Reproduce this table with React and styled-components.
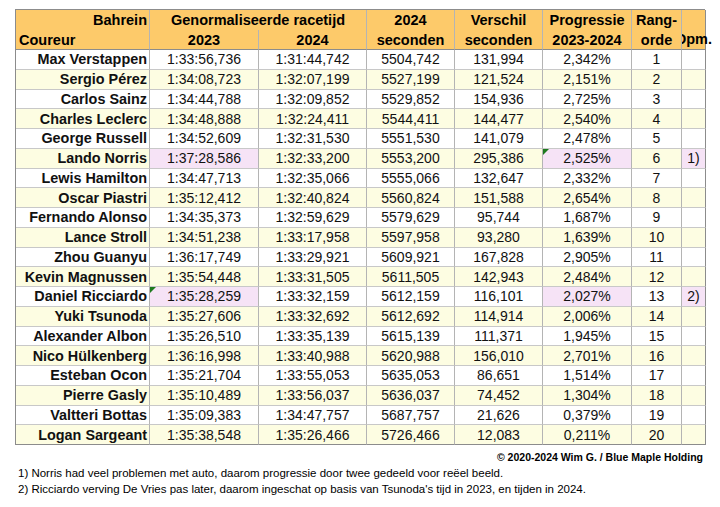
import React from 'react';
import styled, { createGlobalStyle } from 'styled-components';

const GlobalStyle = createGlobalStyle`
  body {
    margin: 0;
    background: #ffffff;
    font-family: "Liberation Sans", Arial, sans-serif;
    color: #000;
  }
`;

const ORANGE = '#fdca6a';
const CREAM = '#fdfde2';
const PINK = '#f6e3f6';
const LINE = '#b4b4b4';
const EDGE = '#8c8c8c';

const rows = [
  ['Max Verstappen', '1:33:56,736', '1:31:44,742', '5504,742', '131,994', '2,342%', '1'],
  ['Sergio Pérez', '1:34:08,723', '1:32:07,199', '5527,199', '121,524', '2,151%', '2'],
  ['Carlos Sainz', '1:34:44,788', '1:32:09,852', '5529,852', '154,936', '2,725%', '3'],
  ['Charles Leclerc', '1:34:48,888', '1:32:24,411', '5544,411', '144,477', '2,540%', '4'],
  ['George Russell', '1:34:52,609', '1:32:31,530', '5551,530', '141,079', '2,478%', '5'],
  ['Lando Norris', '1:37:28,586', '1:32:33,200', '5553,200', '295,386', '2,525%', '6', '1)'],
  ['Lewis Hamilton', '1:34:47,713', '1:32:35,066', '5555,066', '132,647', '2,332%', '7'],
  ['Oscar Piastri', '1:35:12,412', '1:32:40,824', '5560,824', '151,588', '2,654%', '8'],
  ['Fernando Alonso', '1:34:35,373', '1:32:59,629', '5579,629', '95,744', '1,687%', '9'],
  ['Lance Stroll', '1:34:51,238', '1:33:17,958', '5597,958', '93,280', '1,639%', '10'],
  ['Zhou Guanyu', '1:36:17,749', '1:33:29,921', '5609,921', '167,828', '2,905%', '11'],
  ['Kevin Magnussen', '1:35:54,448', '1:33:31,505', '5611,505', '142,943', '2,484%', '12'],
  ['Daniel Ricciardo', '1:35:28,259', '1:33:32,159', '5612,159', '116,101', '2,027%', '13', '2)'],
  ['Yuki Tsunoda', '1:35:27,606', '1:33:32,692', '5612,692', '114,914', '2,006%', '14'],
  ['Alexander Albon', '1:35:26,510', '1:33:35,139', '5615,139', '111,371', '1,945%', '15'],
  ['Nico Hülkenberg', '1:36:16,998', '1:33:40,988', '5620,988', '156,010', '2,701%', '16'],
  ['Esteban Ocon', '1:35:21,704', '1:33:55,053', '5635,053', '86,651', '1,514%', '17'],
  ['Pierre Gasly', '1:35:10,489', '1:33:56,037', '5636,037', '74,452', '1,304%', '18'],
  ['Valtteri Bottas', '1:35:09,383', '1:34:47,757', '5687,757', '21,626', '0,379%', '19'],
  ['Logan Sargeant', '1:35:38,548', '1:35:26,466', '5726,466', '12,083', '0,211%', '20'],
];

// rows with a remark: pink cells + a comment marker
const remarks = {
  'Lando Norris': { marker: 5 },
  'Daniel Ricciardo': { marker: 1 },
};

const Page = styled.div`
  padding: 9px 0 0 15px;
  width: 690px;
`;

const Sheet = styled.div`
  display: grid;
  grid-template-columns: 134px 109px 108px 88px 88px 89px 50px 24px;
  grid-template-rows: 20px 20px repeat(20, 19.75px);
  border-left: 1px solid ${EDGE};
  border-top: 1px solid ${EDGE};
  font-size: 14px;
`;

const Head = styled.div`
  grid-column: ${p => p.$col};
  grid-row: ${p => p.$row};
  background: ${ORANGE};
  border-right: 1px solid ${p => (p.$last ? EDGE : LINE)};
  border-bottom: ${p => (p.$open ? 'none' : `1px solid ${EDGE}`)};
  display: flex;
  flex-direction: column;
  justify-content: ${p => p.$justify || 'center'};
  align-items: center;
  font-weight: bold;
  font-size: 14.5px;
  line-height: 20px;
  white-space: nowrap;
`;

const CornerHead = styled(Head)`
  align-items: stretch;
  padding: 0 2px 0 3px;
`;

const HeadLine = styled.span`
  text-align: ${p => p.$align || 'center'};
`;

const ClippedHead = styled(Head)`
  clip-path: inset(0 -12px 0 0);
`;

const Cell = styled.div`
  position: relative;
  background: ${p => p.$bg};
  border-right: 1px solid ${p => (p.$last ? EDGE : LINE)};
  border-bottom: 1px solid ${p => (p.$end ? EDGE : '#c8c8c8')};
  display: flex;
  align-items: center;
  justify-content: ${p => (p.$name ? 'flex-end' : 'center')};
  padding: ${p => (p.$name ? '0 2px 0 0' : '0')};
  font-weight: ${p => (p.$name ? 'bold' : 'normal')};
  font-size: ${p => (p.$name ? '14.4px' : '14px')};
  white-space: nowrap;
  color: #111;
`;

const Marker = styled.span`
  position: absolute;
  top: 0;
  left: 0;
  width: 0;
  height: 0;
  border-top: 6px solid #1e7a1e;
  border-right: 6px solid transparent;
`;

const Copyright = styled.div`
  margin-top: 5px;
  padding-right: 2px;
  text-align: right;
  font-size: 10.5px;
  font-weight: bold;
  line-height: 14px;
`;

const Notes = styled.div`
  margin-top: 2px;
  padding-left: 3px;
  font-size: 11.5px;
  line-height: 15.5px;
  width: 700px;
`;

export default function App() {
  return (
    <>
      <GlobalStyle />
      <Page>
        <Sheet>
          <CornerHead $col="1" $row="1 / span 2">
            <HeadLine $align="right">Bahrein</HeadLine>
            <HeadLine $align="left">Coureur</HeadLine>
          </CornerHead>
          <Head $col="2 / span 2" $row="1" $open>Genormaliseerde racetijd</Head>
          <Head $col="2" $row="2">2023</Head>
          <Head $col="3" $row="2">2024</Head>
          <Head $col="4" $row="1 / span 2">
            <span>2024</span>
            <span>seconden</span>
          </Head>
          <Head $col="5" $row="1 / span 2">
            <span>Verschil</span>
            <span>seconden</span>
          </Head>
          <Head $col="6" $row="1 / span 2">
            <span>Progressie</span>
            <span>2023-2024</span>
          </Head>
          <Head $col="7" $row="1 / span 2">
            <span>Rang-</span>
            <span>orde</span>
          </Head>
          <ClippedHead $col="8" $row="1 / span 2" $justify="flex-end" $last>
            <span>Opm.</span>
          </ClippedHead>

          {rows.map((r, i) => {
            const base = i % 2 === 1 ? CREAM : '#ffffff';
            const remark = remarks[r[0]];
            const end = i === rows.length - 1;
            return (
              <React.Fragment key={r[0]}>
                {r.slice(0, 7).map((v, c) => {
                  const pink = remark && (c === 1 || c === 5);
                  return (
                    <Cell key={c} $bg={pink ? PINK : base} $name={c === 0} $end={end}>
                      {remark && remark.marker === c && <Marker />}
                      {v}
                    </Cell>
                  );
                })}
                <Cell $bg={remark ? PINK : base} $end={end} $last>
                  {r[7] || ''}
                </Cell>
              </React.Fragment>
            );
          })}
        </Sheet>
        <Copyright>© 2020-2024 Wim G. / Blue Maple Holding</Copyright>
        <Notes>
          <div>1) Norris had veel problemen met auto, daarom progressie door twee gedeeld voor reëel beeld.</div>
          <div>2) Ricciardo verving De Vries pas later, daarom ingeschat op basis van Tsunoda's tijd in 2023, en tijden in 2024.</div>
        </Notes>
      </Page>
    </>
  );
}
